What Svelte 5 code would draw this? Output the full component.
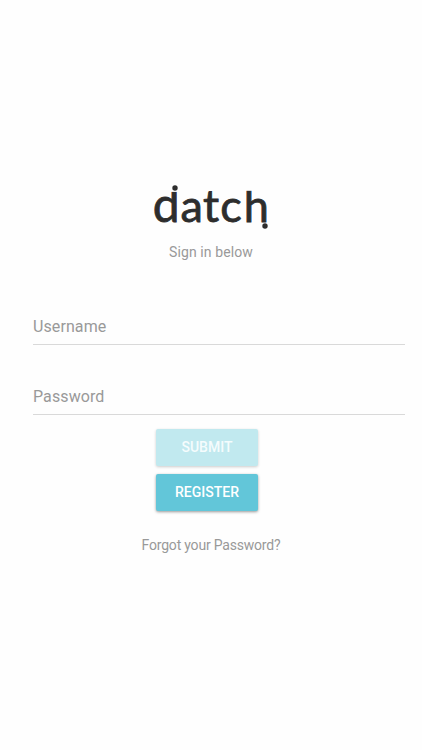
<script>
	let username = $state("")
	let password = $state("")

	let canSubmit = $derived(username.length > 0 && password.length > 0)

	function submit(e) {
		e.preventDefault()
	}
</script>

<main>
	<svg class="logo" width="118" height="46" viewBox="0 0 118 46" role="img" aria-label="datch">
		<text x="0.8 28.6 51 68.2 91.8" y="38.6"><tspan class="first">d</tspan>atch</text>
		<!-- trims the stems of the d and the h -->
		<rect x="17" y="0" width="12" height="8.9" />
		<rect x="90" y="0" width="12" height="7.8" />
		<circle cx="23" cy="5" r="2.7" />
		<circle cx="113" cy="43" r="2.7" />
	</svg>
	<p class="hint">Sign in below</p>

	<form onsubmit={submit}>
		<input type="text" placeholder="Username" bind:value={username}>
		<input type="password" placeholder="Password" bind:value={password}>
		<div class="buttons">
			<button type="submit" disabled={!canSubmit}>Submit</button>
			<button type="button">Register</button>
		</div>
	</form>

	<p class="forgot">Forgot your Password?</p>
</main>

<style>
	:global(body) {
		background: #fefefe;
	}

	main {
		box-sizing: border-box;
		height: 750px;
		padding: 183px 17px 0 33px;
		display: flex;
		flex-direction: column;
		font-family: Roboto, sans-serif;
		color: #999;
	}

	.logo {
		align-self: center;
		margin-right: 16px;
		overflow: visible;
	}

	.logo text {
		font-family: Lato, sans-serif;
		font-size: 45px;
		stroke: #2d2d2d;
		stroke-width: 0.8;
	}

	.logo .first {
		font-size: 48px;
	}

	.logo text, .logo circle {
		fill: #2d2d2d;
	}

	.logo rect {
		fill: #fefefe;
	}

	p {
		margin: 0;
		font-size: 14px;
		line-height: 20px;
		text-align: center;
	}

	.hint {
		margin: 13px 16px 0 0;
		letter-spacing: 0.1px;
	}

	form {
		display: flex;
		flex-direction: column;
	}

	input {
		box-sizing: border-box;
		width: 100%;
		height: 38px;
		margin: 45px 0 0;
		padding: 1px 0 0;
		border: 0;
		border-bottom: 1px solid #d9d9d9;
		border-radius: 0;
		outline: none;
		background: none;
		font-family: inherit;
		font-size: 16px;
		letter-spacing: 0.1px;
		color: #333;
	}

	input + input {
		margin-top: 32px;
	}

	input::placeholder {
		color: #999;
		opacity: 1;
	}

	.buttons {
		display: flex;
		flex-direction: column;
		gap: 8px;
		width: 102px;
		margin: 14px 0 0 123px;
	}

	button {
		height: 37px;
		padding: 0 0 1px;
		border: 0;
		border-radius: 2px;
		background: #62c6d9;
		box-shadow: 0 1px 3px rgba(0, 0, 0, 0.4);
		font-family: inherit;
		font-size: 14px;
		font-weight: 500;
		text-transform: uppercase;
		color: #fff;
	}

	button:disabled {
		background: #c1e9ef;
		box-shadow: 0 1px 3px rgba(0, 0, 0, 0.2);
		color: #f5fcfd;
	}

	.forgot {
		margin: 24px 16px 0 0;
		letter-spacing: -0.2px;
	}
</style>
